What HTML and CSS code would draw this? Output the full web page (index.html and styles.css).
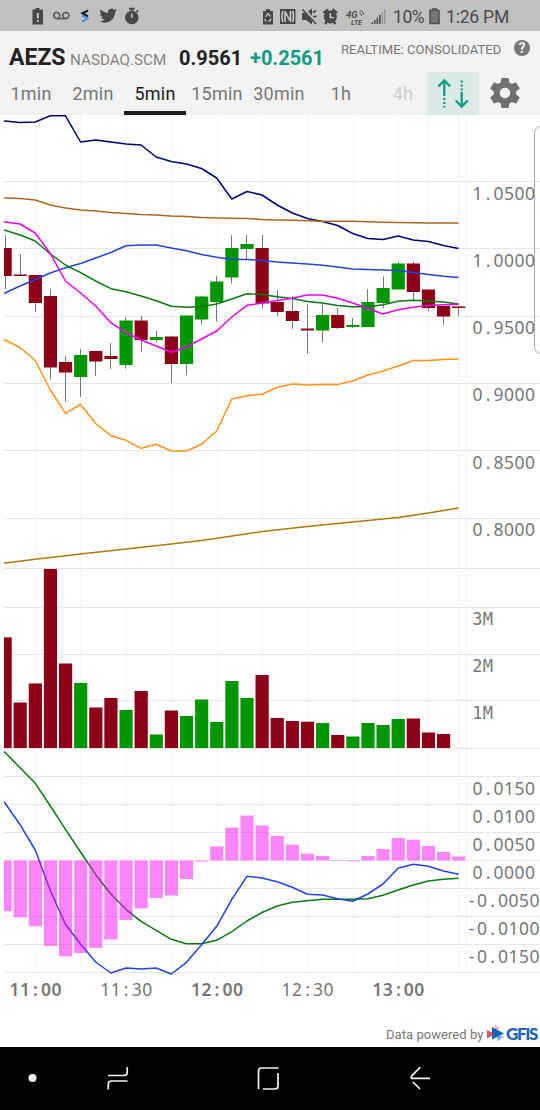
FILE: index.html
```html
<!DOCTYPE html>
<html lang="en">
<head>
<meta charset="utf-8">
<title>AEZS</title>
<link rel="stylesheet" href="styles.css">
</head>
<body>
<div class="statusbar">
  <svg class="status-icons" width="150" height="31" viewBox="0 0 150 31">
    <path fill="#484848" d="M32.5 9.5h3V8h4v1.500h3.500v15h-10.500z"/>
    <path stroke="#d0d0d0" stroke-width="1.800" d="M37.800 13v5.500M37.800 20v2"/>
    <g fill="none" stroke="#555" stroke-width="1.500"><circle cx="56.800" cy="15.500" r="3"/><circle cx="65.800" cy="15.500" r="3"/><path d="M56.800 18.700h9"/></g>
    <path fill="none" stroke="#111" stroke-width="2" d="M88 10.500l-5.500 2.800 5.500 3"/>
    <path fill="none" stroke="#4a90e2" stroke-width="2" d="M82 15.500l5.500 3-5.500 3.300"/>
    <path fill="#484848" transform="translate(99.500 7) scale(.72)" d="M23.950 4.570a10 10 0 0 1-2.820.77 4.960 4.960 0 0 0 2.160-2.720c-.95.550-2 .950-3.130 1.180a4.920 4.920 0 0 0-8.380 4.480C7.690 8.090 4.070 6.130 1.640 3.160a4.930 4.930 0 0 0 1.520 6.570 4.900 4.900 0 0 1-2.230-.61v.060a4.920 4.920 0 0 0 3.950 4.830 5 5 0 0 1-2.210.080 4.940 4.940 0 0 0 4.600 3.420A9.870 9.870 0 0 1 0 19.540a13.990 13.990 0 0 0 7.550 2.210c9.050 0 14-7.500 14-13.980 0-.210 0-.420-.020-.630a9.940 9.940 0 0 0 2.460-2.550z"/>
    <circle cx="131.800" cy="17.500" r="6.800" fill="#484848"/>
    <path stroke="#484848" stroke-width="2" d="M129 8.800h5.600M131.800 9v3M136.500 12l1.500-1.500"/>
    <path stroke="#ccc" stroke-width="1.500" d="M131.800 13.500v4.500"/>
  </svg>
  <svg class="status-icons" width="130" height="31" viewBox="260 0 130 31">
    <path fill="#484848" d="M263 11h3V9h4v2h3v13.500h-10z"/>
    <path fill="none" stroke="#ccc" stroke-width="1.200" d="M265.500 17l2.500-3.500 2.500 3M271 18.500l-1 2.500h-2M266.500 21h-1l-.5-2"/>
    <path fill="#484848" d="M280 9h15.500v15H280z"/>
    <path fill="none" stroke="#d0d0d0" stroke-width="1.500" d="M283 11c-1.300 2-1.300 9 0 11M285 22V11.500l5.500 10V11M292.500 11c1.300 2 1.300 9 0 11"/>
    <path fill="#484848" d="M302 13h4l6-4.500v16L306 20h-4z"/>
    <path stroke="#c0c0c0" stroke-width="3" d="M304 9l13 15"/>
    <path stroke="#484848" stroke-width="1.700" d="M302.500 9.500l13.500 14.500M313 12.500l3-2M313 16.500h3.500"/>
    <circle cx="330.300" cy="17" r="6.500" fill="#484848"/>
    <path stroke="#484848" stroke-width="2.500" d="M323.500 13l4.500-3.500M337 13l-4.500-3.500M325 24l2-2.500M335.500 24l-2-2.500"/>
    <path fill="none" stroke="#ccc" stroke-width="1.400" d="M330.300 13v4.500h3.500"/>
    <text class="net" x="346" y="18" font-size="9.500">4G</text><text class="net" x="351" y="24.500" font-size="7">LTE</text>
    <path fill="none" stroke="#555" d="M359.500 13q2 0 2 3M359.500 10.500q4 0 4 4.500"/>
    <path stroke="#505050" stroke-width="1.600" d="M372.300 24v-2M374.800 24v-4M377.300 24v-6.500M379.800 24v-9"/>
    <path stroke="#999" stroke-width="1.600" d="M382.300 24v-12M384.800 24v-15"/>
  </svg>
  <span class="pct">10%</span>
  <svg class="batt" width="12" height="17" viewBox="0 0 12 17"><path fill="#777" stroke="#505050" stroke-width="1.500" d="M1 2.500h2.500V1h4v1.500H10v13H1z"/></svg>
  <span class="time">1:26 PM</span>
</div>

<header class="header">
  <div class="quote">
    <span class="sym">AEZS</span><span class="exch">NASDAQ.SCM</span><span class="price">0.9561</span><span class="chg">+0.2561</span>
    <span class="feed">REALTIME: CONSOLIDATED</span>
    <span class="help">?</span>
  </div>
  <nav class="tabs">
    <span class="tab">1min</span><span class="tab">2min</span><span class="tab active">5min</span><span class="tab">15min</span><span class="tab">30min</span><span class="tab">1h</span><span class="tab fade">4h</span>
    <span class="toggle">
      <svg width="52" height="43" viewBox="0 0 52 43"><g fill="none" stroke="#129a83" stroke-width="2.300"><path d="M17.300 24V9M11.300 14.500l6-6 6 6"/><path d="M17.300 26v2M17.300 30v2M17.300 34v1.500"/><path d="M34.700 20v14M28.700 28.500l6 6 6-6"/><path d="M34.700 8.500v2M34.700 12.500v2M34.700 16.500v2"/></g></svg>
    </span>
    <svg class="gear" width="36" height="36" viewBox="0 0 24 24"><path fill="#707070" d="M19.430 12.980c.040-.320.070-.640.070-.980s-.030-.660-.070-.980l2.110-1.650c.190-.150.240-.420.120-.640l-2-3.460c-.120-.220-.390-.300-.610-.220l-2.490 1c-.520-.400-1.080-.730-1.690-.980l-.380-2.650C14.460 2.180 14.250 2 14 2h-4c-.250 0-.460.180-.490.420l-.380 2.650c-.610.250-1.170.590-1.690.980l-2.490-1c-.230-.090-.490 0-.610.220l-2 3.460c-.130.220-.070.490.120.640l2.110 1.650c-.040.320-.070.650-.070.980s.030.660.070.980l-2.110 1.650c-.190.150-.240.420-.120.640l2 3.460c.120.220.390.300.610.220l2.490-1c.520.400 1.080.730 1.690.980l.380 2.650c.030.240.240.420.490.420h4c.250 0 .460-.180.490-.420l.380-2.650c.610-.250 1.170-.590 1.690-.980l2.490 1c.230.090.490 0 .610-.220l2-3.460c.120-.220.070-.490-.120-.640l-2.110-1.650zM12 15.500c-1.930 0-3.500-1.570-3.500-3.500s1.570-3.500 3.500-3.500 3.500 1.570 3.500 3.500-1.570 3.500-3.500 3.500z"/></svg>
  </nav>
</header>

<main class="chart">
  <svg id="plot" width="540" height="893" viewBox="0 115 540 893">
    <defs><clipPath id="area"><rect x="4" y="115" width="536" height="893"/></clipPath></defs>
  </svg>
</main>
<div class="credit">
  <span>Data powered by</span>
  <svg width="18" height="17" viewBox="0 0 18 17"><path fill="#f0a0a8" d="M8 0l5 4-5 1z"/><path fill="#ef5661" d="M0 5l8 4-8 4.500z"/><path fill="#7fb4ea" d="M10 10l7 1.500-7 5z"/><path fill="#1763b8" d="M5 2l12 6.500L5 14.500z"/></svg>
  <b class="gfis">GFIS</b>
</div>

<footer class="navbar">
  <svg width="540" height="63" viewBox="0 1047 540 63"><circle cx="32.500" cy="1078" r="4" fill="#f2f2f2"/><g fill="none" stroke="#f2f2f2" stroke-width="1.700"><path d="M108 1075.500h16q3.200 0 3.200-3v-5.500M127.500 1081h-16q-3.200 0-3.200 3v5.500"/><path d="M278.500 1068h-17q-3 0-3 3v18M278 1073v13q0 3-3 3h-12"/><path d="M430 1078.300h-18.500q-.8-1.300.3-2.400l8.500-8.700M413 1082l7 7"/></g></svg>
</footer>
<script src="script.js"></script>
</body>
</html>
```
FILE: styles.css
```css
* { box-sizing: border-box; }
body { margin: 0; width: 540px; height: 1110px; overflow: hidden; background: #fff; font-family: Roboto, "Noto Sans", sans-serif; display: flex; flex-direction: column; }
svg { display: block; flex: none; }
.statusbar { height: 31px; flex: none; background: #c0c0c0; display: flex; align-items: center; color: #4a4a4a; font-size: 17.5px; white-space: nowrap; }
.status-icons + .status-icons { margin-left: 110px; }
.net { font-weight: 700; font-style: italic; fill: #505050; }
.pct { width: 39px; padding: 3px 0 0 3px; letter-spacing: -.4px; }
.batt { margin-top: 2px; }
.time { margin-left: 5px; padding-top: 3px; letter-spacing: -.2px; }
.header { height: 84px; flex: none; background: #f3f3f3; }
.quote { height: 41px; display: flex; align-items: baseline; padding: 13px 9px 0; line-height: 27px; white-space: nowrap; color: #222; }
.sym { width: 61px; font-weight: 700; font-size: 23px; }
.exch { width: 109px; font-size: 15.2px; color: #858585; }
.price { width: 71px; font-size: 20px; font-weight: 700; }
.chg { width: 91px; font-size: 20px; font-weight: 700; color: #129a83; }
.feed { width: 173px; font-size: 13.1px; line-height: 16px; align-self: flex-start; margin-top: -2px; color: #777; }
.help { flex: none; width: 16px; height: 16px; align-self: flex-start; margin-top: -4px; border-radius: 50%; background: #777; color: #f3f3f3; font-size: 14px; font-weight: 700; line-height: 16px; text-align: center; }
.tabs { height: 43px; display: flex; font-size: 18px; color: #777; }
.tab { width: 62px; flex: none; text-align: center; line-height: 44px; letter-spacing: .25px; }
.tab.active { color: #1c1c1c; border-bottom: 4px solid #1c211e; }
.tab.fade { width: 55px; padding-left: 7px; color: #cfcfcf; }
.toggle { width: 52px; flex: none; background: #dceae7; }
.gear { margin: 3px 0 0 8px; }
.chart { height: 893px; flex: none; }
.credit { height: 39px; flex: none; display: flex; align-items: center; padding: 12px 0 0 386px; font-size: 13px; color: #777; white-space: nowrap; gap: 3px; }
.credit span { width: 98px; padding-top: 1px; letter-spacing: .05px; }
.gfis { font: 900 17px/17px Lato, sans-serif; color: #1763b8; letter-spacing: -1.400px; margin-left: -2px; }
.navbar { height: 63px; flex: none; background: #000; }
.axis { font-family: "Noto Sans", sans-serif; font-size: 17.500px; fill: #777; text-anchor: middle; }
.axis.strong { font-weight: 600; }
.axis.vol { font-family: "DejaVu Sans Mono", monospace; font-size: 17px; }
.grid { stroke: #e7e7e7; }
.vgrid { stroke: #f6f6f6; }
.cursor { stroke: #e4e4e4; stroke-dasharray: 2 2; }
.wick { stroke: #777; }
.up { fill: #009600; }
.down { fill: #8c0018; }
.hist { fill: #ff00ff; fill-opacity: .48; }
.line { fill: none; stroke-width: 1.500; stroke-linejoin: round; }
.frame { fill: none; stroke: #aaa; }
```
FILE: script.js
```js
const svg = document.getElementById('plot');
const NS = 'http://www.w3.org/2000/svg';
function add(tag, attrs, parent = svg) {
  const e = document.createElementNS(NS, tag);
  for (const k in attrs) e.setAttribute(k, attrs[k]);
  parent.appendChild(e);
  return e;
}
const cx = i => 5 + 15.12 * i;
const plot = add('g', { 'clip-path': 'url(#area)' });

// grid
[35.5, 80.5, 126.5, 171.5, 217.5, 262.5, 307.5, 353.5, 398.5, 428.5, 466.5].forEach(x => add('path', { class: 'vgrid', d: `M${x} 115V973` }, plot));
[181.5, 248.5, 316.5, 383.5, 450.5, 518.5, 568.5, 607.5, 654.5, 700.5, 748.5, 776.5, 804.5, 832.5, 860.5, 888.5, 916.5, 944.5, 972.5]
  .forEach(y => add('path', { class: 'grid', d: `M4 ${y}H540` }, plot));
add('path', { class: 'cursor', d: 'M458.5 115V973' }, plot);

// candles: high, body top, body bottom, low, direction
const candles = [
  [235,248,276,289,0],[254,274.500,276,276,0],[275,275,303,312,0],[289,296,367.500,379,0],[356,362,372.500,402,0],
  [349,355,377,397,1],[351,351,361.500,376,0],[343,356,359,369,0],[317.500,320.500,365,368.500,1],[316,320.500,340,351.500,0],
  [330.500,337,340,342,1],[336,336.500,364,383,0],[315.500,315.500,364,375,1],[296,296.500,319.500,324.500,1],[276,281.500,302,321.500,1],
  [235,248,277.500,283.500,1],[235,244,249,259,1],[235,248,303.500,308.500,0],[290,302,312,316,0],[296,311,321,329,0],
  [304.500,328.500,330.500,353.500,0],[304.500,315,330.500,342.500,1],[308,315,328,329,0],[318,325,327,328,1],[289,302,327,327,1],
  [276.500,288,303,308,1],[262,263.500,289.500,289.500,1],[262,263.500,292,300,0],[289.500,289.500,308,311,0],[306,306,316.500,325,0],[306,306.500,308,316,0]
];
candles.forEach(([h, t, b, l, up], i) => {
  const x = Math.floor(cx(i)) + .5;
  add('path', { class: 'wick', d: `M${x} ${h}V${l}` }, plot);
  add('rect', { class: up ? 'up' : 'down', x: cx(i) - 6.5, y: t, width: 13.2, height: b - t }, plot);
});

// volume
const vol = [637.3,702.5,683.5,569,663.5,683,707.5,698,710,691,734.5,710.5,716,699.5,722,681,698,675,718,721,721.7,723,735,736.5,723,725,719,718.5,732.5,734];
vol.forEach((y, i) => add('rect', { class: candles[i][4] ? 'up' : 'down', x: cx(i) - 6.5, y, width: 13.2, height: 748 - y }, plot));

function line(color, ys) {
  const pts = ys.map((p, i) => Array.isArray(p) ? [cx(p[0]), p[1]] : [cx(i), p]);
  const [a, b] = pts;
  const y0 = a[1] - (b[1] - a[1]) / (b[0] - a[0]);
  add('polyline', { class: 'line', stroke: color, points: [[a[0] - 1, y0], ...pts].join(' ') }, plot);
}
line('#00007c', [121,122.5,122,115.8,115.8,142,140,142,144,145,157,161.5,164,168.5,178,199,191.5,195,205,213,218.5,221.5,225.5,233.5,238.5,239.5,236,240,241.5,245.5,248.5]);
line('#a96a20', [198,198.5,200,205,208,210,211,212.5,213.5,214.5,215,216,216.5,217.5,218,218.3,218.5,219.5,220,220.3,220.8,221.2,221.3,221.3,221.8,222.2,222.4,222.7,223,223,223]);
line('#ff9218', [340,347.5,360.5,390,413.3,404.5,423.5,435.7,440.3,448.3,444.3,451,451,444.3,431,399,395.7,394.3,387.5,384,385,384.5,384.5,381,375,371,366,360.5,360.5,359.5,359]);
line('#b1780c', [[0,563],[2,559.3],[5,554],[8,549],[11,544],[13,540.5],[17,531.5],[20,526.5],[23,522],[26,517.5],[28,513],[30,508]]);
line('#2044e8', [293,286,279.5,273,267.8,263.5,258,252.5,245.7,245,245,248,250.7,254.5,257.3,259.3,259.5,260.5,262,263,264,265.3,267,269,269.5,270,270.5,272.5,274.5,276.3,277.5]);
line('#087a10', [230.3,235,241,254,265,272.7,281,288.7,291.7,296,300.7,306.3,307.3,306.5,304,299,293.7,294.5,296.7,298.5,301.5,303,305.5,306.8,306.8,304.7,301.3,300.3,301,302,304]);
line('#f000f0', [222,224,233,253.5,281,293,306,322.7,332.7,340,346,352.3,347,339,331,317,305.3,303,300.5,298.3,295,295,298.3,303,308.5,314,309.7,307.3,305.5,304.7,304.3]);

// MACD
line('#087a10', [752.5,767.7,783.3,806,829.3,852,874.7,894,909.3,921.3,930.3,939.3,943.7,943.7,940.3,931.7,921,912.5,906,902.3,900.7,899.3,899.3,899.3,898.7,895.3,890,885,881,879.3,878.3]);
line('#2044e8', [803,824.7,850,890.7,924.3,944.3,962,973,968,969,968,974,962.3,944.7,926.3,899.3,876.3,878,881.7,887.3,894.3,895,898.7,901.3,894,884,868.3,864.3,866.3,871,874.3]);
const hist = [911.3,917.3,926.3,946,956.3,953,948,939.5,920,908.3,898,895.5,879,861.5,846.5,827.5,815.5,825.5,836,844.7,853.7,856,860,861.3,856,849,838,839.7,846,852,856.5];
hist.forEach((y, i) => add('rect', { class: 'hist', x: cx(i) - 6.5, y: Math.min(y, 860.5), width: 13.2, height: Math.abs(y - 860.5) }, plot));

// axis labels, one fixed-pitch cell per character
function label(text, x, y, cls = '') {
  add('text', { class: 'axis ' + cls, y, x: [...text].map((c, k) => (x + k * 10.5).toFixed(1)).join(' ') }).textContent = text;
}
['1.0500', '1.0000', '0.9500', '0.9000', '0.8500', '0.8000'].forEach((t, k) => label(t, 477.5, 199.5 + k * 67.3));
['3M', '2M', '1M'].forEach((t, k) => label(t, 477.3, 625.3 + k * 46.9, 'vol'));
['0.0150', '0.0100', '0.0050', '0.0000'].forEach((t, k) => label(t, 477.5, 794.5 + k * 28));
['-0.0050', '-0.0100', '-0.0150'].forEach((t, k) => label(t, 471.5, 906.5 + k * 28));
['11:00', '11:30', '12:00', '12:30', '13:00'].forEach((t, k) => label(t, 14.5 + k * 90.7, 996, k % 2 ? '' : 'strong'));

add('rect', { class: 'frame', x: 534.5, y: 126.5, width: 30, height: 227, rx: 6 });
```
